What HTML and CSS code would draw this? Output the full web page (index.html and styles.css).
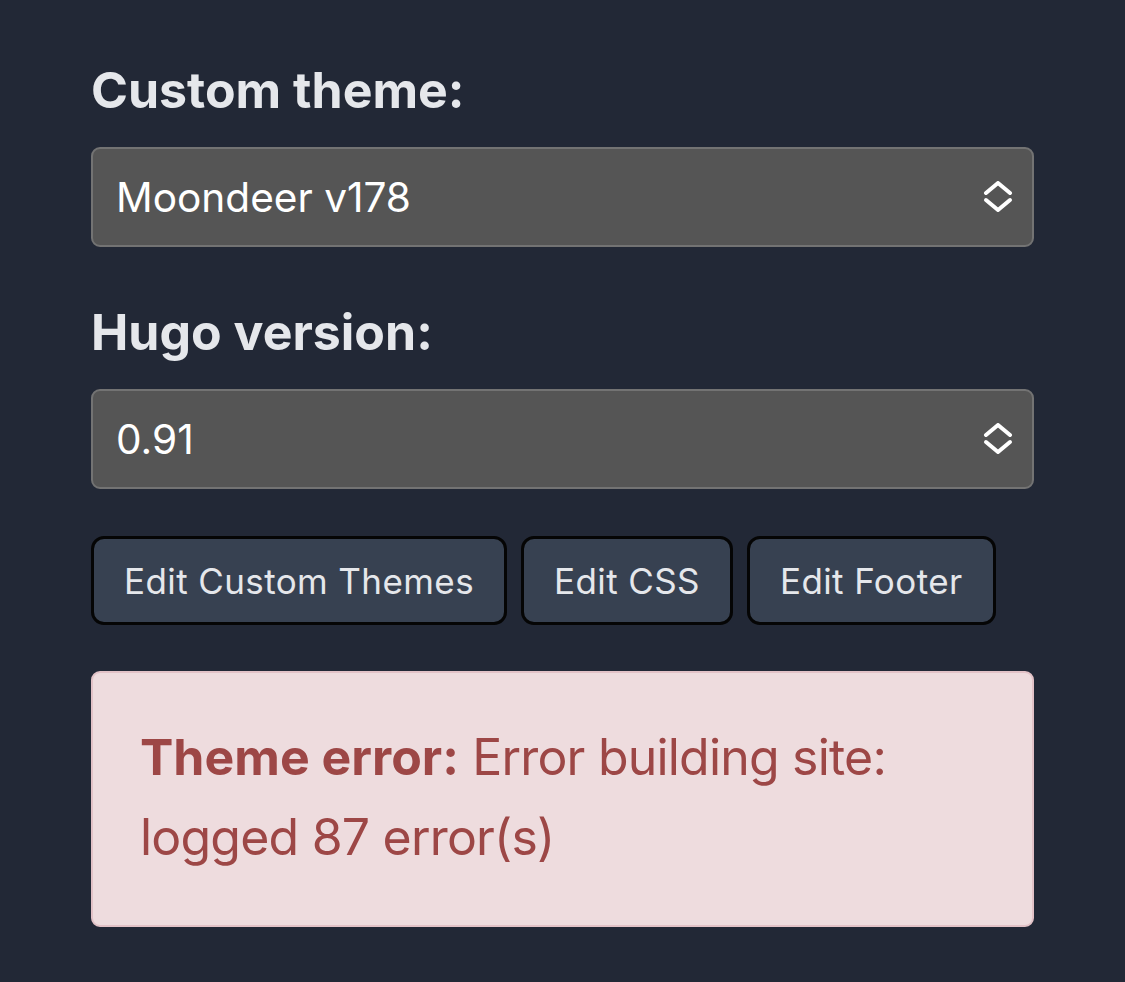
FILE: index.html
```html
<!DOCTYPE html>
<html lang="en">
<head>
<meta charset="utf-8">
<title>Theme settings</title>
<link rel="stylesheet" href="styles.css">
</head>
<body>
<main class="panel">
  <div class="field">
    <label class="field-label">Custom theme:</label>
    <div class="select">
      <span class="select-value">Moondeer v178</span>
      <svg class="select-arrow" width="30" height="32" viewBox="0 0 30 32" aria-hidden="true">
        <path d="M3 12 L15 2 L27 12" fill="none" stroke="#ffffff" stroke-width="4" stroke-linecap="round" stroke-linejoin="round"/>
        <path d="M3 19 L15 29 L27 19" fill="none" stroke="#ffffff" stroke-width="4" stroke-linecap="round" stroke-linejoin="round"/>
      </svg>
    </div>
  </div>
  <div class="field">
    <label class="field-label">Hugo version:</label>
    <div class="select">
      <span class="select-value">0.91</span>
      <svg class="select-arrow" width="30" height="32" viewBox="0 0 30 32" aria-hidden="true">
        <path d="M3 12 L15 2 L27 12" fill="none" stroke="#ffffff" stroke-width="4" stroke-linecap="round" stroke-linejoin="round"/>
        <path d="M3 19 L15 29 L27 19" fill="none" stroke="#ffffff" stroke-width="4" stroke-linecap="round" stroke-linejoin="round"/>
      </svg>
    </div>
  </div>
  <div class="actions">
    <button class="btn">Edit Custom Themes</button>
    <button class="btn">Edit CSS</button>
    <button class="btn">Edit Footer</button>
  </div>
  <div class="alert">
    <p class="alert-text"><strong>Theme error:</strong> Error building site: logged 87 error(s)</p>
  </div>
</main>
</body>
</html>
```
FILE: styles.css
```css
html, body {
  margin: 0;
  padding: 0;
  background: #222836;
}
body {
  font-family: Inter, "Noto Sans", "Liberation Sans", sans-serif;
  color: #e5e7eb;
}
.panel {
  width: 943px;
  margin-left: 91px;
  padding-top: 60px;
  display: flex;
  flex-direction: column;
}
.field {
  display: flex;
  flex-direction: column;
  margin-bottom: 55px;
}
.field + .field {
  margin-bottom: 47px;
}
.field-label {
  font-size: 50px;
  line-height: 60px;
  font-weight: 700;
  color: #e5e7eb;
  margin-bottom: 27px;
}
.select {
  box-sizing: border-box;
  height: 100px;
  border: 2px solid #737373;
  border-radius: 9px;
  background: #555555;
  display: flex;
  align-items: center;
  justify-content: space-between;
  padding: 0 19px 0 23px;
}
.select-value {
  font-size: 40.6px;
  color: #ffffff;
}
.select-arrow {
  display: block;
}
.actions {
  display: flex;
  gap: 14px;
  margin-bottom: 46px;
}
.btn {
  box-sizing: border-box;
  height: 89px;
  padding: 0 30px;
  border: 3px solid #050505;
  border-radius: 13px;
  background: #374151;
  color: #e5e7eb;
  font-family: inherit;
  font-size: 35px;
  letter-spacing: 0.4px;
}
.alert {
  box-sizing: border-box;
  height: 256px;
  border: 2px solid #e2c2c7;
  border-radius: 9px;
  background: #eedcde;
  padding: 44px 47px 0;
}
.alert-text {
  margin: 0;
  font-size: 50px;
  line-height: 80px;
  color: #9d4746;
  letter-spacing: -0.8px;
}
.alert-text strong {
  font-weight: 700;
  letter-spacing: 0;
}
```
